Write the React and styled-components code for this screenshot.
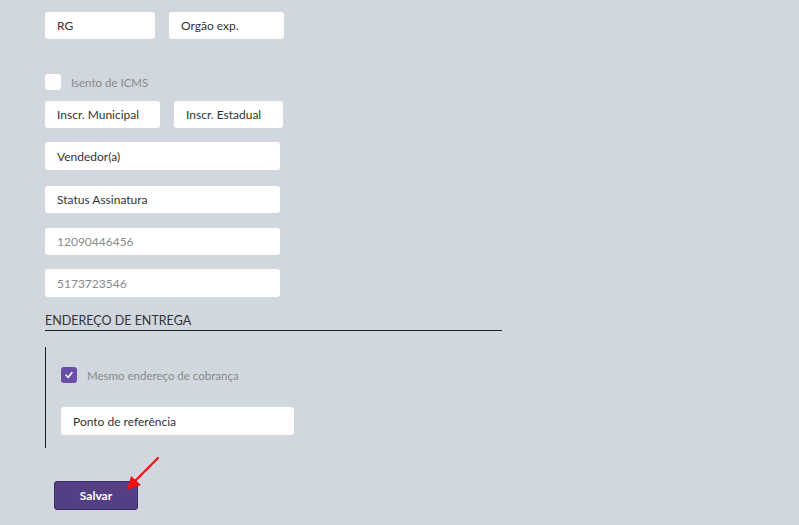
import React from 'react';
import styled, { createGlobalStyle } from 'styled-components';

const GlobalStyle = createGlobalStyle`
  html, body {
    margin: 0;
    padding: 0;
    background: #d0d7de;
    font-family: Lato, "Open Sans", sans-serif;
  }
`;

const Page = styled.div`
  position: relative;
  width: 799px;
  height: 525px;
  padding: 12px 0 0 45px;
  box-sizing: border-box;
  overflow: hidden;
`;

const Row = styled.div`
  display: flex;
  gap: 14px;
  margin-top: ${(p) => p.$mt || 0}px;
`;

const Field = styled.input`
  box-sizing: border-box;
  width: ${(p) => p.$w}px;
  height: ${(p) => p.$h || 28}px;
  margin-top: ${(p) => p.$mt || 0}px;
  display: block;
  padding: 0 12px;
  border: none;
  border-radius: 3px;
  background: #fff;
  font-family: Lato, sans-serif;
  font-size: 12px;
  color: #333;
  outline: none;
  &::placeholder {
    color: #333;
  }
  &.muted::placeholder {
    color: #8a8a8a;
  }
`;

const CheckRow = styled.label`
  display: flex;
  align-items: center;
  gap: 10px;
  margin-top: ${(p) => p.$mt || 0}px;
  font-size: 11.5px;
  color: #8a8a8a;
  height: 16px;
`;

const Box = styled.span`
  box-sizing: border-box;
  width: 16px;
  height: 16px;
  border-radius: 3px;
  background: ${(p) => (p.$checked ? '#6a4fa6' : '#fff')};
  display: flex;
  align-items: center;
  justify-content: center;
`;

const Heading = styled.div`
  width: 457px;
  margin-top: 16px;
  padding-bottom: 2px;
  border-bottom: 1px solid #222;
  font-size: 12.5px;
  color: #333;
  line-height: 15px;
`;

const Section = styled.div`
  margin-top: 16px;
  height: 101px;
  border-left: 1px solid #222;
  padding: 20px 0 0 15px;
  box-sizing: border-box;
`;

const SaveButton = styled.button`
  display: block;
  margin: 33px 0 0 9px;
  width: 84px;
  height: 29px;
  background: #553f84;
  border: 1px solid #3f2e66;
  border-radius: 3px;
  color: #fff;
  font-family: Lato, sans-serif;
  font-weight: 700;
  font-size: 12px;
  cursor: pointer;
`;

const Arrow = styled.svg`
  position: absolute;
  left: 120px;
  top: 452px;
`;

export default function App() {
  return (
    <Page>
      <GlobalStyle />
      <Row>
        <Field $w={110} $h={27} placeholder="RG" />
        <Field $w={115} $h={27} placeholder="Orgão exp." />
      </Row>
      <CheckRow $mt={35}>
        <Box />
        Isento de ICMS
      </CheckRow>
      <Row $mt={11}>
        <Field $w={115} $h={27} placeholder="Inscr. Municipal" />
        <Field $w={109} $h={27} placeholder="Inscr. Estadual" />
      </Row>
      <Field $w={235} $mt={14} placeholder="Vendedor(a)" />
      <Field $w={235} $h={27} $mt={16} placeholder="Status Assinatura" />
      <Field $w={235} $h={27} $mt={15} className="muted" placeholder="12090446456" />
      <Field $w={235} $mt={14} className="muted" placeholder="5173723546" />
      <Heading>ENDEREÇO DE ENTREGA</Heading>
      <Section>
        <CheckRow>
          <Box $checked>
            <svg width="10" height="10" viewBox="0 0 10 10">
              <path d="M2 5.2 L4.2 7.4 L8 2.6" fill="none" stroke="#fff" strokeWidth="1.6" strokeLinecap="round" strokeLinejoin="round" />
            </svg>
          </Box>
          Mesmo endereço de cobrança
        </CheckRow>
        <Field $w={233} $mt={24} placeholder="Ponto de referência" />
      </Section>
      <SaveButton>Salvar</SaveButton>
      <Arrow width="45" height="45" viewBox="0 0 45 45">
        <line x1="38" y1="6" x2="14" y2="30" stroke="#f01010" strokeWidth="2.2" strokeLinecap="round" />
        <polygon points="7,38 11,24 21,33" fill="#f01010" />
      </Arrow>
    </Page>
  );
}
